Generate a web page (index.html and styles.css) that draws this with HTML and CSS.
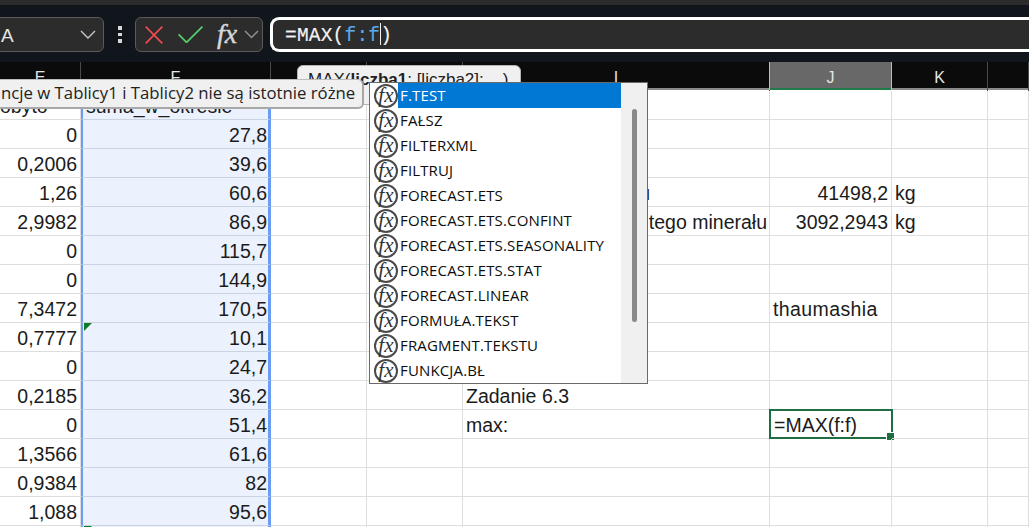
FILE: index.html
```html
<!DOCTYPE html>
<html lang="pl">
<head>
<meta charset="utf-8">
<title>Excel</title>
<link rel="stylesheet" href="styles.css">
</head>
<body>
<div class="app">
  <div class="ribbon-edge"></div>
  <div class="toolbar">
    <div class="namebox">
      <span class="name">A</span>
      <svg class="chev" width="16" height="9" viewBox="0 0 16 9"><path d="M1 1l7 7 7-7" fill="none" stroke="#c8c8c8" stroke-width="1.4"/></svg>
    </div>
    <div class="dots"><i></i><i></i><i></i></div>
    <div class="fxgroup">
      <svg class="ico-x" width="18" height="18" viewBox="0 0 18 18"><path d="M.7.7l16.6 16.6M17.3.7L.7 17.3" fill="none" stroke="#ef4b50" stroke-width="1.7"/></svg>
      <svg class="ico-ok" width="25" height="17" viewBox="0 0 25 17"><path d="M.6 8.4l8 8L24.4.6" fill="none" stroke="#55cf6c" stroke-width="1.7"/></svg>
      <span class="fx-label">fx</span>
      <svg class="chev-small" width="15" height="9" viewBox="0 0 15 9"><path d="M1 1l6.500 6.500L14 1" fill="none" stroke="#8f8f8f" stroke-width="1.500"/></svg>
    </div>
    <div class="formula">=MAX(<span class="ref">f:f</span><span class="caret"></span>)</div>
  </div>

  <div class="colhead">
    <div class="hc">E</div>
    <div class="hc">F</div>
    <div class="hc"></div>
    <div class="hc"></div>
    <div class="hc">I</div>
    <div class="hc hc-on">J</div>
    <div class="hc">K</div>
    <div class="hc"></div>
  </div>

  <div class="sheet">
    <div class="c num title-end">obyto</div><div class="c sel">suma_w_okresie</div><div class="c"></div><div class="c"></div><div class="c"></div><div class="c"></div><div class="c"></div><div class="c"></div>
    <div class="c num">0</div><div class="c sel num">27,8</div><div class="c"></div><div class="c"></div><div class="c"></div><div class="c"></div><div class="c"></div><div class="c"></div>
    <div class="c num">0,2006</div><div class="c sel num">39,6</div><div class="c"></div><div class="c"></div><div class="c"></div><div class="c"></div><div class="c"></div><div class="c"></div>
    <div class="c num">1,26</div><div class="c sel num">60,6</div><div class="c"></div><div class="c"></div><div class="c num tail-short">u</div><div class="c num">41498,2</div><div class="c">kg</div><div class="c"></div>
    <div class="c num">2,9982</div><div class="c sel num">86,9</div><div class="c"></div><div class="c"></div><div class="c num tail">tego minerału</div><div class="c num">3092,2943</div><div class="c">kg</div><div class="c"></div>
    <div class="c num">0</div><div class="c sel num">115,7</div><div class="c"></div><div class="c"></div><div class="c"></div><div class="c"></div><div class="c"></div><div class="c"></div>
    <div class="c num">0</div><div class="c sel num">144,9</div><div class="c"></div><div class="c"></div><div class="c"></div><div class="c"></div><div class="c"></div><div class="c"></div>
    <div class="c num">7,3472</div><div class="c sel num">170,5</div><div class="c"></div><div class="c"></div><div class="c"></div><div class="c word">thaumashia</div><div class="c"></div><div class="c"></div>
    <div class="c num">0,7777</div><div class="c sel num flag">10,1</div><div class="c"></div><div class="c"></div><div class="c"></div><div class="c"></div><div class="c"></div><div class="c"></div>
    <div class="c num">0</div><div class="c sel num">24,7</div><div class="c"></div><div class="c"></div><div class="c"></div><div class="c"></div><div class="c"></div><div class="c"></div>
    <div class="c num">0,2185</div><div class="c sel num">36,2</div><div class="c"></div><div class="c"></div><div class="c">Zadanie 6.3</div><div class="c"></div><div class="c"></div><div class="c"></div>
    <div class="c num">0</div><div class="c sel num">51,4</div><div class="c"></div><div class="c"></div><div class="c">max:</div><div class="c active">=MAX(f:f)</div><div class="c"></div><div class="c"></div>
    <div class="c num">1,3566</div><div class="c sel num">61,6</div><div class="c"></div><div class="c"></div><div class="c"></div><div class="c"></div><div class="c"></div><div class="c"></div>
    <div class="c num">0,9384</div><div class="c sel num">82</div><div class="c"></div><div class="c"></div><div class="c"></div><div class="c"></div><div class="c"></div><div class="c"></div>
    <div class="c num">1,088</div><div class="c sel num">95,6</div><div class="c"></div><div class="c"></div><div class="c"></div><div class="c"></div><div class="c"></div><div class="c"></div>
    <div class="c"></div><div class="c sel flag"></div><div class="c"></div><div class="c"></div><div class="c"></div><div class="c"></div><div class="c"></div><div class="c"></div>
  </div>

  <div class="argtip">MAX(<b>liczba1</b>; [liczba2]; ...)</div>
  <div class="tooltip">ncje w Tablicy1 i Tablicy2 nie są istotnie różne</div>

  <div class="dropdown">
    <ul class="list">
      <li class="item on"><span class="fxi">fx</span><span class="lbl">F.TEST</span></li>
      <li class="item"><span class="fxi">fx</span><span class="lbl">FAŁSZ</span></li>
      <li class="item"><span class="fxi">fx</span><span class="lbl">FILTERXML</span></li>
      <li class="item"><span class="fxi">fx</span><span class="lbl">FILTRUJ</span></li>
      <li class="item"><span class="fxi">fx</span><span class="lbl">FORECAST.ETS</span></li>
      <li class="item"><span class="fxi">fx</span><span class="lbl">FORECAST.ETS.CONFINT</span></li>
      <li class="item"><span class="fxi">fx</span><span class="lbl">FORECAST.ETS.SEASONALITY</span></li>
      <li class="item"><span class="fxi">fx</span><span class="lbl">FORECAST.ETS.STAT</span></li>
      <li class="item"><span class="fxi">fx</span><span class="lbl">FORECAST.LINEAR</span></li>
      <li class="item"><span class="fxi">fx</span><span class="lbl">FORMUŁA.TEKST</span></li>
      <li class="item"><span class="fxi">fx</span><span class="lbl">FRAGMENT.TEKSTU</span></li>
      <li class="item"><span class="fxi">fx</span><span class="lbl">FUNKCJA.BŁ</span></li>
    </ul>
    <div class="scroll"><div class="thumb"></div></div>
  </div>
</div>
</body>
</html>
```
FILE: styles.css
```css
* { box-sizing: border-box; }
html, body { margin: 0; padding: 0; }
body { background: #fff; overflow: hidden; }
.app {
  position: relative;
  width: 1029px;
  height: 527px;
  overflow: hidden;
  font-family: "Liberation Sans", Arial, sans-serif;
  color: #1b1b1b;
}
.ribbon-edge { height: 5px; background: #2c2c2c; }
.toolbar {
  height: 57px;
  background: #11161d;
  display: flex;
  align-items: flex-start;
  padding-top: 12px;
}
.namebox {
  width: 130px;
  height: 35px;
  margin-left: -26px;
  padding: 0 7px 0 26px;
  flex: none;
  display: flex;
  align-items: center;
  justify-content: space-between;
  background: #2c2c2c;
  border: 1px solid #5a5a5a;
  border-radius: 6px;
  color: #e6e6e6;
  font-size: 19px;
}
.name { position: relative; top: 1px; }
.dots {
  width: 31px;
  height: 35px;
  flex: none;
  display: flex;
  flex-direction: column;
  align-items: center;
  justify-content: center;
  gap: 3px;
}
.dots i { width: 4px; height: 3.5px; background: #d8d8d8; display: block; }
.fxgroup {
  width: 128px;
  height: 35px;
  flex: none;
  display: flex;
  align-items: center;
  background: #2c2c2c;
  border: 1px solid #5a5a5a;
  border-radius: 6px;
  padding-left: 9px;
}
.ico-ok { margin-left: 15px; }
.fx-label {
  margin-left: 14px;
  font: italic 28px/1 "Liberation Serif", serif;
  -webkit-text-stroke: 0.4px currentColor;
  color: #d8d8d8;
  width: 25px;
  position: relative;
  top: -1px;
}
.chev-small { margin-left: 2px; }
.formula {
  flex: none;
  width: 790px;
  height: 35px;
  margin-left: 7px;
  padding-left: 12px;
  background: #2c2c2c;
  border: 3px solid #fff;
  border-right: 0;
  border-radius: 9px 0 0 9px;
  color: #f4f4f4;
  font: 19.5px/32px "Liberation Mono", monospace;
  letter-spacing: 0.2px;
  -webkit-text-stroke: 0.15px currentColor;
}
.ref { color: #59a8e8; }
.caret {
  display: inline-block;
  width: 1px;
  height: 22px;
  background: #f2f2f2;
  vertical-align: -4px;
  margin-right: -1px;
}
.colhead, .sheet {
  display: grid;
  grid-template-columns: 81px 190px 96px 96px 307px 122px 96px 41px;
}
.colhead {
  height: 28px;
  background: #0b0b0b;
  border-bottom: 2px solid #8a8a8a;
}
.hc {
  color: #e6e6e6;
  font-size: 16px;
  line-height: 32px;
  text-align: center;
  border-right: 1px solid #4a4a4a;
}
.hc-on {
  background: #686868;
  border-left: 1px solid #bdbdbd;
  border-right: 1px solid #bdbdbd;
  box-shadow: inset 0 -2px 0 #1f7a4a;
  height: 28px;
  margin-left: -1px;
}
.sheet { grid-auto-rows: 29px; padding-top: 1px; }
.c {
  position: relative;
  padding: 0 3px;
  border-right: 1px solid #dedede;
  border-bottom: 1px solid #dedede;
  font-size: 19.5px;
  line-height: 31px;
  white-space: nowrap;
  overflow: hidden;
}
.num { text-align: right; }
.title-end { padding-right: 37px; padding-left: 0; overflow: hidden; text-indent: 0; }
.tail { padding-right: 2px; }
.tail-short { padding-right: 119px; }
.word { letter-spacing: 0.4px; }
.sel {
  background: #ebf1fd;
  border-bottom-color: #c9d3e2;
  border-left: 2px solid #6a9cf5;
  border-right: 3px solid #6a9cf5;
  padding-right: 1px;
  overflow: visible;
}
.flag::before {
  content: "";
  position: absolute;
  left: 1px;
  top: 0;
  border-top: 8px solid #0f7b26;
  border-right: 8px solid transparent;
}
.active {
  border: 2px solid #1f6e43;
  margin: -1px -1px 0 -1px;
  height: 30px;
  line-height: 29px;
  overflow: visible;
}
.active::after {
  content: "";
  position: absolute;
  right: -3px;
  bottom: -3px;
  width: 7px;
  height: 7px;
  background: #1f6e43;
  border: 1px solid #fff;
  border-right: 0;
  border-bottom: 0;
}
.argtip {
  position: absolute;
  left: 297px;
  top: 65px;
  width: 224px;
  height: 40px;
  padding: 4px 0 0 10px;
  background: #f0f0f0;
  border: 1px solid #b5b5b5;
  border-radius: 6px;
  font-size: 17px;
  line-height: 20px;
  color: #222;
  white-space: nowrap;
  overflow: hidden;
}
.tooltip {
  position: absolute;
  left: -20px;
  top: 79px;
  width: 384px;
  height: 30px;
  padding-left: 20px;
  background: #f0f0f0;
  border: 1px solid #bdbdbd;
  border-right: 2px solid #a8a8a8;
  border-bottom: 2px solid #a8a8a8;
  border-radius: 6px;
  font-family: "Open Sans", "Liberation Sans", sans-serif;
  font-size: 16.75px;
  line-height: 26px;
  color: #222;
  white-space: nowrap;
}
.dropdown {
  position: absolute;
  left: 369px;
  top: 82px;
  width: 279px;
  height: 302px;
  display: flex;
  background: #fff;
  border: 1px solid #6a6a6a;
  font-family: "Open Sans", "Liberation Sans", sans-serif;
}
.list { flex: 1; margin: 0; padding: 0; list-style: none; overflow: hidden; }
.item {
  height: 25px;
  display: flex;
  align-items: center;
  font-size: 15px;
  letter-spacing: 0.15px;
  color: #0d0d0d;
  white-space: nowrap;
}
.fxi {
  flex: none;
  width: 24px;
  height: 24px;
  margin-left: 4px;
  border: 2px solid #4a4a4a;
  border-radius: 50%;
  text-align: center;
  font: italic 21px/18px "Liberation Serif", serif;
  color: #333;
}
.lbl { flex: 1; padding-left: 2px; line-height: 25px; }
.on .lbl { background: #0078d4; color: #fff; }
.scroll { flex: none; width: 26px; background: #f0f0f0; padding: 26px 0 0 11px; }
.thumb { width: 5px; height: 213px; background: #8a8a8a; border-radius: 3px; }
```
